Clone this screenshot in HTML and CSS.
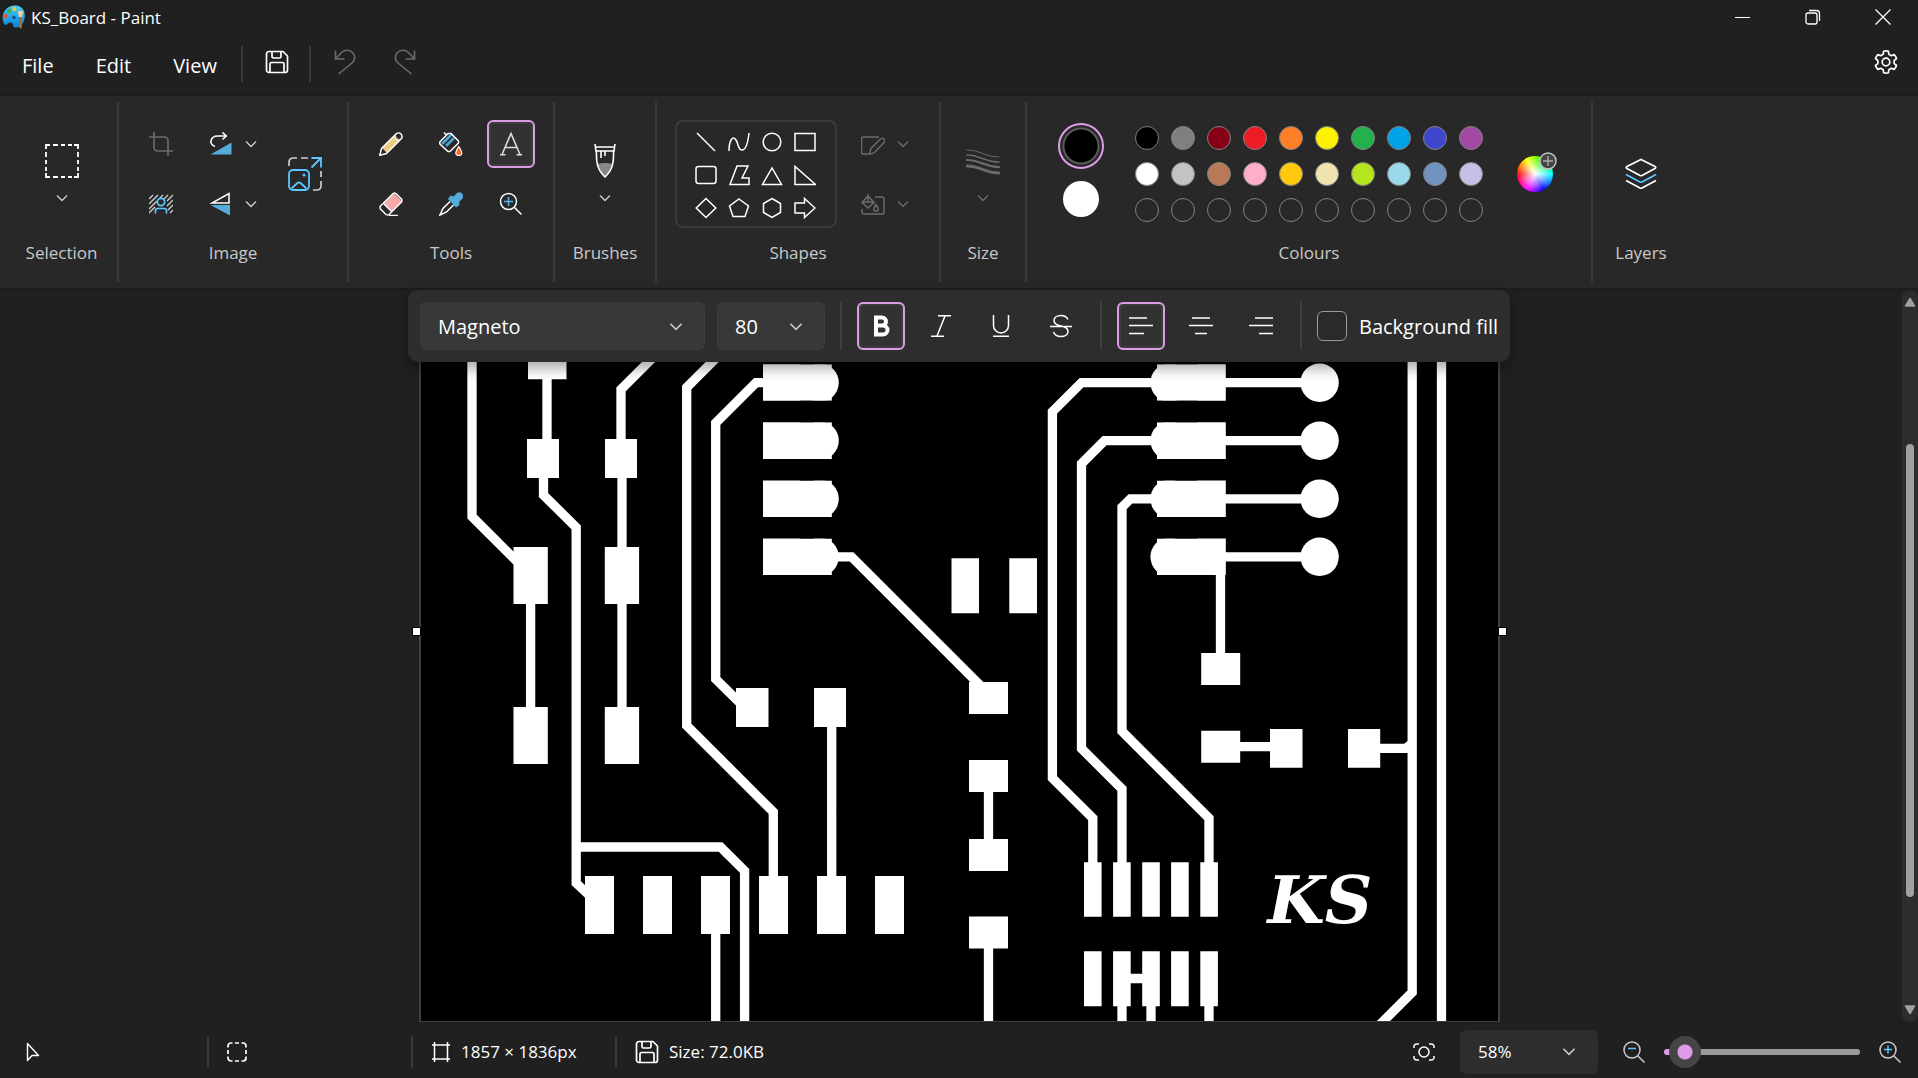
FILE: index.html
```html
<!DOCTYPE html>
<html lang="en-GB">
<head>
<meta charset="utf-8">
<title>KS_Board - Paint</title>
<link rel="stylesheet" href="styles.css">
</head>
<body>
<svg class="defs" aria-hidden="true">
  <symbol id="chevron" viewBox="0 0 12 8"><path d="M1 1.500 6 6.500l5-5" fill="none" stroke="currentColor" stroke-width="1.400"/></symbol>
  <symbol id="save" viewBox="0 0 24 24"><g fill="none" stroke="currentColor" stroke-width="1.700" stroke-linejoin="round"><path d="M4 1.500h14L22.500 6v14a2.500 2.500 0 0 1-2.500 2.500H4A2.500 2.500 0 0 1 1.500 20V4A2.500 2.500 0 0 1 4 1.500z"/><path d="M7 1.500v5A1.500 1.500 0 0 0 8.500 8h6A1.500 1.500 0 0 0 16 6.500v-5M5 22.500V14a1.500 1.500 0 0 1 1.500-1.500h11A1.500 1.500 0 0 1 19 14v8.500"/></g></symbol>
  <linearGradient id="palette" x1="0" y1="0" x2="0" y2="1"><stop offset="0" stop-color="#45d0f5"/><stop offset="1" stop-color="#0a7fd6"/></linearGradient>
</svg>

<header class="titlebar">
  <svg class="app-icon" viewBox="0 0 24 26"><path d="M2 20C-1 14 1 6 7 3c6-3 13-1 15 4 2 6 0 13-5 16-3 1-6 1-6-2 0-2-2-3-4-2-2 1-3 3-5 1z" fill="url(#palette)"/><circle cx="4" cy="12" r="2.200" fill="#f1502f"/><circle cx="7" cy="7" r="2.200" fill="#3fae49"/><circle cx="12.500" cy="5" r="2" fill="#ffc928"/><circle cx="12" cy="13.500" r="1.700" fill="#0b4f86"/><path d="M16 7h5v2l-1 4h-3l-1-4z" fill="#e8cfae"/><path d="M17 13h3v10l-1.500 2-1.500-2z" fill="#b3661e"/></svg>
  <h1 class="title">KS_Board - Paint</h1>
  <div class="window-buttons">
    <button class="window-button" aria-label="Minimise"><svg width="16" height="16" viewBox="0 0 16 16"><path d="M0 8.500h15" stroke="#fff"/></svg></button>
    <button class="window-button" aria-label="Restore"><svg width="16" height="16" viewBox="0 0 16 16" fill="none" stroke="#fff" stroke-width="1.300"><rect x="1" y="4" width="11" height="11" rx="2"/><path d="M4 1.500h7.500a3 3 0 0 1 3 3V12"/></svg></button>
    <button class="window-button" aria-label="Close"><svg width="16" height="16" viewBox="0 0 16 16"><path d="M.5.5l15 15m0-15l-15 15" stroke="#fff" stroke-width="1.300"/></svg></button>
  </div>
</header>

<nav class="menubar">
  <button class="menu">File</button>
  <button class="menu">Edit</button>
  <button class="menu">View</button>
  <span class="divider"></span>
  <button class="quick" aria-label="Save"><svg width="24" height="24"><use href="#save"/></svg></button>
  <span class="divider"></span>
  <button class="quick muted" aria-label="Undo"><svg width="24" height="26" viewBox="0 0 24 26" fill="none" stroke="currentColor" stroke-width="1.600"><path d="M2.500 1.500v8.500h9M2.500 10l6-6.500c4-3.500 9-2.500 11.500.5 2.500 3.500 2 7-1 10L5.500 25"/></svg></button>
  <button class="quick muted" aria-label="Redo"><svg width="24" height="26" viewBox="0 0 24 26" fill="none" stroke="currentColor" stroke-width="1.600"><path d="M21.500 1.500v8.500h-9M21.500 10l-6-6.500C11.500 0 6.500 1 4 4c-2.500 3.500-2 7 1 10L18.500 25"/></svg></button>
  <button class="quick settings" aria-label="Settings"><svg width="24" height="24" viewBox="0 0 24 24" fill="none" stroke="currentColor" stroke-width="1.700" stroke-linejoin="round"><path d="M9.200 4.200 9.600 1.300q2.400-.8 4.800 0l.4 2.900 2.550 1.500 2.750-1.100q2 1.700 2.400 4.100l-2.350 1.800v3l2.350 1.800q-.6 2.500-2.400 4.100l-2.750-1.100-2.550 1.500-.4 2.900q-2.400.8-4.800 0l-.4-2.900-2.550-1.500-2.750 1.100q-1.800-1.600-2.400-4.100l2.350-1.800v-3L1.500 8.700q.6-2.500 2.400-4.100l2.750 1.100z"/><circle cx="12" cy="12" r="3.800"/></svg></button>
</nav>

<section class="ribbon" aria-label="Ribbon">
  <div class="group group-selection">
    <button class="tall" aria-label="Selection">
      <svg width="34" height="34" viewBox="0 0 34 34" fill="none" stroke="#fff" stroke-width="1.800"><path d="M5 1H1v4M29 1h4v4M5 33H1v-4M29 33h4v-4M8 1h5m3 0h4m3 0h4M8 33h5m3 0h4m3 0h4M1 8v5m0 3v4m0 3v4M33 8v5m0 3v4m0 3v4"/></svg>
      <svg class="chevron"><use href="#chevron"/></svg>
    </button>
    <h2 class="caption">Selection</h2>
  </div>

  <div class="group">
    <div class="cluster">
      <div class="stack">
        <button class="tool muted" aria-label="Crop"><svg width="24" height="24" viewBox="0 0 24 24" fill="none" stroke="currentColor" stroke-width="1.700"><path d="M0 5h15.500A3.500 3.500 0 0 1 19 8.500V24M5 0v15.500A3.500 3.500 0 0 0 8.500 19H24"/></svg></button>
        <button class="tool" aria-label="Remove background"><svg width="24" height="20" viewBox="0 0 24 20" fill="none"><path d="M0 5l4-4M0 10l9-9M0 15l8-8M0 19l6-6M11 4l3-3M15 5l4-4M18 7l6-6M18 12l6-6M19 16l5-5M21 19l3-3" stroke="#ccc" stroke-width="1.400"/><circle cx="12" cy="8" r="3.600" stroke="#5bc8ff" stroke-width="1.700"/><path d="M6.500 19.500v-3a2 2 0 0 1 2-2h7a2 2 0 0 1 2 2v3" stroke="#5bc8ff" stroke-width="1.700"/></svg></button>
      </div>
      <div class="stack">
        <button class="split" aria-label="Rotate"><svg width="24" height="24" viewBox="0 0 24 24" fill="none"><path d="M22.500 10.500V22.500H1.500z" fill="#56acd8"/><path d="M6 14.500C3 13.500 1.500 11 2 9c.5-3.500 3.500-5 7-5h8M13.500.5 17.300 4l-3.800 3.500" stroke="#fff" stroke-width="1.600"/></svg><svg class="chevron"><use href="#chevron"/></svg></button>
        <button class="split" aria-label="Flip"><svg width="24" height="24" viewBox="0 0 24 24"><path d="M20 1.500v9.500H3z" fill="none" stroke="#fff" stroke-width="1.500"/><path d="M21 13v10.500L1.500 13z" fill="#56acd8"/></svg><svg class="chevron"><use href="#chevron"/></svg></button>
      </div>
      <button class="tool tool-tall" aria-label="Resize"><svg width="34" height="34" viewBox="0 0 34 34" fill="none"><path d="M1 9V5a4 4 0 0 1 4-4h4M13 1h7M33 14v6M33 24v5a4 4 0 0 1-4 4h-4" stroke="#ccc" stroke-width="1.700"/><g stroke="#5bc8ff" stroke-width="1.800"><path d="M23.500 1H33v9.500M33 1 23.500 10.500"/><rect x="1" y="13" width="20" height="20" rx="4"/><path d="M3.500 31.500 9.500 26q1.500-1.300 3 0l6 5.500"/></g><circle cx="16" cy="18" r="1.500" fill="#5bc8ff"/></svg></button>
    </div>
    <h2 class="caption">Image</h2>
  </div>

  <div class="group">
    <div class="tool-grid">
      <button class="tool" aria-label="Pencil"><svg width="24" height="24" viewBox="0 0 24 24"><path d="M3 16 16 3l5 5L8 21z" fill="#edcd83"/><path d="M.8 23.200 2.500 16.500 17 2a3.500 3.500 0 0 1 5 5L7.500 21.500z" fill="none" stroke="#fff" stroke-width="1.500" stroke-linejoin="round"/><path d="M16 3.200q0 5 5 5" fill="#282828" stroke="#fff" stroke-width="1.200"/></svg></button>
      <button class="tool" aria-label="Fill"><svg width="24" height="24" viewBox="0 0 24 24" fill="none"><path d="M3 12 13 2M7 14 15 6" stroke="#4ea9d8" stroke-width="2.500"/><path d="M5 .5l3 3M10 1.500h2L19.500 9v2L11 19.500H9L.8 12v-2L9 1.500z" stroke="#fff" stroke-width="1.500"/><path d="M19.800 14.500q6 9 0 9t0-9z" fill="#fe6226" stroke="#fff" stroke-width="1.200"/></svg></button>
      <button class="tool selected" aria-label="Text" aria-pressed="true"><svg width="24" height="24" viewBox="0 0 24 24" fill="none" stroke="#ddd" stroke-width="1.600"><path d="M3 22.500 12 1.500l9 21M6 15.500h12M1 22.700h5.500m11 0H23"/></svg></button>
      <button class="tool" aria-label="Eraser"><svg width="24" height="24" viewBox="0 0 24 24"><path d="M4.500 11.500 14 2q1-1 2 0l6.500 6.500q1 1 0 2L13 20z" fill="#f6a9a9"/><path d="M1.500 14 14 1.500q1.500-1 3 0l5.500 5.500q1 1.500 0 3L10 22.500q-1.500 1-3 0L1.500 17q-1-1.500 0-3zM4.500 11.500 13 20M10 23.400h9" fill="none" stroke="#fff" stroke-width="1.400"/></svg></button>
      <button class="tool" aria-label="Colour picker"><svg width="24" height="24" viewBox="0 0 24 24"><path d="M11 9.500 4 16.500.8 23.200 7.500 20l7-7" fill="none" stroke="#fff" stroke-width="1.500"/><path d="M9 7l2.500-3.500 3 1L18 1a4 4 0 0 1 5.500 5.500L20 10l.5 3-3.500 2.500z" fill="#56acd8"/></svg></button>
      <button class="tool" aria-label="Magnifier"><svg width="24" height="24" viewBox="0 0 24 24" fill="none"><circle cx="9.500" cy="9.500" r="8" stroke="#fff" stroke-width="1.500"/><path d="M15.500 15.500 22.500 22.500" stroke="#fff" stroke-width="1.500"/><path d="M9.500 5v9M5 9.500h9" stroke="#56b4e6" stroke-width="1.600"/></svg></button>
    </div>
    <h2 class="caption">Tools</h2>
  </div>

  <div class="group group-brushes">
    <button class="tall" aria-label="Brushes">
      <svg width="24" height="34" viewBox="0 0 24 34" fill="none"><path d="M4 20q8-2 16 0-1 7-8 12.500Q5 27 4 20z" fill="#888"/><path d="M2 0l1 7h18l1-7M3 3h18" stroke="#fff" stroke-width="1.600"/><path d="M3.500 7c-.5 12 1 19 8.500 26 7.500-7 9-14 8.500-26M8 7v7M12 7v5" stroke="#fff" stroke-width="1.600"/></svg>
      <svg class="chevron"><use href="#chevron"/></svg>
    </button>
    <h2 class="caption">Brushes</h2>
  </div>

  <div class="group">
    <div class="cluster">
      <div class="shape-box">
        <button class="shape" aria-label="Line"><svg viewBox="0 0 22 22"><path d="M2 2l18 18"/></svg></button>
        <button class="shape" aria-label="Curve"><svg viewBox="0 0 22 22"><path d="M1 20C1 9 5 4 8 9s2 10 6 10 6-8 7-17"/></svg></button>
        <button class="shape" aria-label="Oval"><svg viewBox="0 0 22 22"><circle cx="11" cy="11" r="8.800"/></svg></button>
        <button class="shape" aria-label="Rectangle"><svg viewBox="0 0 22 22"><path d="M1 2.500h20v17H1z"/></svg></button>
        <button class="shape" aria-label="Rounded rectangle"><svg viewBox="0 0 22 22"><rect x="1" y="2.500" width="20" height="17" rx="2.500"/></svg></button>
        <button class="shape" aria-label="Polygon"><svg viewBox="0 0 22 22"><path d="M9 2h11l-6 12h7v6.500H2z"/></svg></button>
        <button class="shape" aria-label="Triangle"><svg viewBox="0 0 22 22"><path d="M11 4 1.500 20.500h19z"/></svg></button>
        <button class="shape" aria-label="Right triangle"><svg viewBox="0 0 22 22"><path d="M1 2.500v18h20.500z"/></svg></button>
        <button class="shape" aria-label="Diamond"><svg viewBox="0 0 22 22"><path d="M11 1.500 20.800 11 11 20.500 1.200 11z"/></svg></button>
        <button class="shape" aria-label="Pentagon"><svg viewBox="0 0 22 22"><path d="M11 2l9.500 7L17 19.500H5L1.500 9z"/></svg></button>
        <button class="shape" aria-label="Hexagon"><svg viewBox="0 0 22 22"><path d="M11 1.500l8.500 5v9l-8.500 5-8.500-5v-9z"/></svg></button>
        <button class="shape" aria-label="Right arrow"><svg viewBox="0 0 22 22"><path d="M1 6h9.500V1.500L21 11 10.500 20.500V16H1z"/></svg></button>
      </div>
      <div class="stack">
        <button class="split muted" aria-label="Shape outline"><svg width="24" height="24" viewBox="0 0 24 24" fill="none" stroke="currentColor" stroke-width="1.500"><path d="M18 5H2.500a2 2 0 0 0-2 2v13a2 2 0 0 0 2 2H8"/><path d="M8.500 22l1.500-5.500L19.500 7q2-1.500 3.500 0t0 3.500L14 20q-2.500 2-5.500 2z"/></svg><svg class="chevron"><use href="#chevron"/></svg></button>
        <button class="split muted" aria-label="Shape fill"><svg width="24" height="24" viewBox="0 0 24 24" fill="none" stroke="currentColor" stroke-width="1.500"><path d="M14 5h7a2 2 0 0 1 2 2v13a2 2 0 0 1-2 2H3a2 2 0 0 1-2-2v-3"/><path d="M7 2v7M1 10.500 7 4l6 6.500L7 16zM1 10h12M15 12.500q4.500 6.500 0 6.500t0-6.500z"/></svg><svg class="chevron"><use href="#chevron"/></svg></button>
      </div>
    </div>
    <h2 class="caption">Shapes</h2>
  </div>

  <div class="group group-size">
    <button class="tall muted" aria-label="Size">
      <svg width="34" height="34" viewBox="0 0 34 34" fill="none" stroke="currentColor" stroke-linecap="round"><path d="M1 6c13 0 18 7 32 7" stroke-width="1"/><path d="M1 11c13 0 18 7 32 7" stroke-width="1.600"/><path d="M1 16c13 0 18 7 32 7" stroke-width="2.200"/><path d="M1 22c13 0 18 7 32 7" stroke-width="2.800"/></svg>
      <svg class="chevron"><use href="#chevron"/></svg>
    </button>
    <h2 class="caption">Size</h2>
  </div>

  <div class="group">
    <div class="colours">
      <div class="current">
        <button class="primary" aria-label="Colour 1, black"></button>
        <button class="secondary" aria-label="Colour 2, white"></button>
      </div>
      <div class="swatches">
        <button class="swatch" style="background:#000000" aria-label="Black"></button>
        <button class="swatch" style="background:#7f7f7f" aria-label="Grey"></button>
        <button class="swatch" style="background:#880015" aria-label="Dark red"></button>
        <button class="swatch" style="background:#ed1c24" aria-label="Red"></button>
        <button class="swatch" style="background:#ff7f27" aria-label="Orange"></button>
        <button class="swatch" style="background:#fff200" aria-label="Yellow"></button>
        <button class="swatch" style="background:#22b14c" aria-label="Green"></button>
        <button class="swatch" style="background:#00a2e8" aria-label="Turquoise"></button>
        <button class="swatch" style="background:#3f48cc" aria-label="Indigo"></button>
        <button class="swatch" style="background:#a349a4" aria-label="Purple"></button>
        <button class="swatch" style="background:#ffffff" aria-label="White"></button>
        <button class="swatch" style="background:#c3c3c3" aria-label="Light grey"></button>
        <button class="swatch" style="background:#b97a57" aria-label="Brown"></button>
        <button class="swatch" style="background:#ffaec9" aria-label="Rose"></button>
        <button class="swatch" style="background:#ffc90e" aria-label="Gold"></button>
        <button class="swatch" style="background:#efe4b0" aria-label="Light yellow"></button>
        <button class="swatch" style="background:#b5e61d" aria-label="Lime"></button>
        <button class="swatch" style="background:#99d9ea" aria-label="Light turquoise"></button>
        <button class="swatch" style="background:#7092be" aria-label="Blue-grey"></button>
        <button class="swatch" style="background:#c8bfe7" aria-label="Lavender"></button>
        <button class="swatch" aria-label="Empty 1"></button>
        <button class="swatch" aria-label="Empty 2"></button>
        <button class="swatch" aria-label="Empty 3"></button>
        <button class="swatch" aria-label="Empty 4"></button>
        <button class="swatch" aria-label="Empty 5"></button>
        <button class="swatch" aria-label="Empty 6"></button>
        <button class="swatch" aria-label="Empty 7"></button>
        <button class="swatch" aria-label="Empty 8"></button>
        <button class="swatch" aria-label="Empty 9"></button>
        <button class="swatch" aria-label="Empty 10"></button>
      </div>
      <button class="edit-colours" aria-label="Edit colours"><span class="wheel"><svg class="wheel-badge" viewBox="0 0 18 18"><circle cx="9" cy="9" r="8" fill="#454545" stroke="#c4c4c4" stroke-width="1.500"/><path d="M9 4v10M4 9h10" stroke="#aaa" stroke-width="1.400"/></svg></span></button>
    </div>
    <h2 class="caption">Colours</h2>
  </div>

  <div class="group group-layers">
    <button class="tall tall-centred" aria-label="Layers"><svg width="32" height="32" viewBox="0 0 32 32" fill="none" stroke-width="1.700"><path d="M16 1.500 30 8.500q1.500 1 0 2L17 17.500q-1 .5-2 0L2 10.500q-1.500-1 0-2z" stroke="#fff"/><path d="M1 16.500 15 24q1 .5 2 0l14-7.500" stroke="#5bc8ff"/><path d="M1 22.500 15 30q1 .5 2 0l14-7.500" stroke="#fff"/></svg></button>
    <h2 class="caption">Layers</h2>
  </div>
</section>

<main class="workspace">
  <div class="canvas">
    <svg class="board" viewBox="421 290 1077 731" preserveAspectRatio="xMidYMin slice" role="img" aria-label="Circuit board artwork">
      <rect x="421" y="290" width="1077" height="731" fill="#000"/>
      <g fill="none" stroke="#fff" stroke-width="9.300">
        <path d="M472 290V516.500L517 561.500M547 370v80M543.500 470v25l32.700 32.500V883L592 898M621 450v-60.500L671 339.500M622 470v85M530.600 600v110M622 600v110"/>
        <path d="M736 338.200 686.700 387.500V725.500L773.300 812v70M770 382.700h-14L715.700 423v256L740 703M825 556.800h26.500L980 685.300M831.700 720v165M572 847H720.500L744.600 871V1021M715.700 930v91"/>
        <path d="M1160 382.700h-78.500L1052.400 411.800V778L1092.800 818.300V870M1160 440.700h-55.500L1081.500 463.700V748.500L1122 789v80M1160 498.800h-29.500L1122 507.300V731.300L1209 818.300V870"/>
        <path d="M1220 382.700h90M1220 440.700h90M1220 498.800h90M1220 556.800h90M1220.500 560v100M1235 746.700h40M1375 748.400h37M1412.200 290V992.300L1378 1026.500M1441.500 290v731"/>
        <path d="M988.500 785v60M988.500 940v81M1122 1000v21M1151 1000v21M1209 1000v21M1128 978.500h18"/>
      </g>
      <g fill="#fff">
        <path d="M528 330h38.500v49.300H528zM527 439h32v39h-32zM605 439h32v39h-32zM513.500 547h34.300v57h-34.300zM604.800 547h34.300v57h-34.300zM513.500 707h34.300v57h-34.300zM604.800 707h34.300v57h-34.300z"/>
        <path d="M763 364.200h68.800v36.600H763zM763 422.300h68.800v36.600H763zM763 480.400h68.800v36.600H763zM763 538.500h68.800v36.600H763z"/>
        <path d="M951.500 558.300h27.500v55H951.500zM1009.300 558.300h27.700v55h-27.700zM736 688h32.500v39H736zM814 688h32v39h-32z"/>
        <path d="M585 876h29v58h-29zM643 876h29v58h-29zM701 876h29v58h-29zM759 876h29v58h-29zM817 876h29v58h-29zM875 876h29v58h-29z"/>
        <path d="M969 682h39v32h-39zM969 760h39v32h-39zM969 839h39v32h-39zM969 916.500h39v32h-39z"/>
        <path d="M1157 364.200h68.800v36.600H1157zM1157 422.300h68.800v36.600H1157zM1157 480.400h68.800v36.600H1157zM1157 538.500h68.800v36.600H1157z"/>
        <path d="M1201.200 653h39v32h-39zM1201.200 730.700h39v32h-39zM1270 729h32.500v38.700H1270zM1348 729h32.200v38.700H1348zM1404 744l6-5v8z"/>
        <path d="M1084 862.300h17.600v54.500H1084zM1113.100 862.300h17.600v54.500h-17.600zM1142.200 862.300h17.600v54.500h-17.600zM1171.100 862.300h17.600v54.500h-17.600zM1200.300 862.300h17.600v54.500h-17.600z"/>
        <path d="M1084 951.200h17.600v55H1084zM1113.100 951.200h17.600v55h-17.600zM1142.200 951.200h17.600v55h-17.600zM1171.100 951.200h17.600v55h-17.600zM1200.300 951.200h17.600v55h-17.600z"/>
        <circle cx="819.600" cy="382.700" r="19.200"/><circle cx="819.600" cy="440.700" r="19.200"/><circle cx="819.600" cy="498.800" r="19.200"/><circle cx="819.600" cy="556.800" r="19.200"/>
        <circle cx="1169.600" cy="382.700" r="19.200"/><circle cx="1169.600" cy="440.700" r="19.200"/><circle cx="1169.600" cy="498.800" r="19.200"/><circle cx="1169.600" cy="556.800" r="19.200"/>
        <circle cx="1319.600" cy="382.700" r="19.200"/><circle cx="1319.600" cy="440.700" r="19.200"/><circle cx="1319.600" cy="498.800" r="19.200"/><circle cx="1319.600" cy="556.800" r="19.200"/>
      </g>
      <g fill="#000">
        <path d="M800 400.800h31.800v3H800zM800 361.500h31.800v2.700H800zM800 458.900h31.800v3H800zM800 419.500h31.800v2.800H800zM800 517h31.800v3H800zM800 477.500h31.800v2.900H800zM800 575.100h31.800v3H800zM800 535.500h31.800v3H800z"/>
        <path d="M1157 400.800h40v3h-40zM1157 361.500h40v2.700h-40zM1157 458.900h40v3h-40zM1157 419.500h40v2.800h-40zM1157 517h40v3h-40zM1157 477.500h40v2.900h-40zM1157 575.100h40v3h-40zM1157 535.500h40v3h-40z"/>
      </g>
      <text class="board-mark" x="1320" y="923" text-anchor="middle">KS</text>
    </svg>
    <span class="handle handle-left"></span>
    <span class="handle handle-right"></span>
  </div>

  <form class="text-bar" aria-label="Text options">
    <div class="combo combo-font">
      <select aria-label="Font"><option>Magneto</option></select>
      <svg class="chevron"><use href="#chevron"/></svg>
    </div>
    <div class="combo combo-size">
      <select aria-label="Font size"><option>80</option></select>
      <svg class="chevron"><use href="#chevron"/></svg>
    </div>
    <span class="bar-divider"></span>
    <button type="button" class="tool selected" aria-label="Bold" aria-pressed="true"><svg width="24" height="24" viewBox="0 0 24 24" fill="none" stroke="#fff" stroke-width="4"><path d="M7 3.500h6a4 4 0 0 1 0 8H7zM7 11.500h7a4.500 4.500 0 0 1 0 9H7zM7 2v20"/></svg></button>
    <button type="button" class="tool" aria-label="Italic"><svg width="24" height="24" viewBox="0 0 24 24" fill="none" stroke="#fff" stroke-width="1.500"><path d="M9 1.800h13M2 22.200h13M16 2 8 22"/></svg></button>
    <button type="button" class="tool" aria-label="Underline"><svg width="24" height="24" viewBox="0 0 24 24" fill="none" stroke="#fff" stroke-width="1.500"><path d="M4.500 1v10.500a7.500 7.500 0 0 0 15 0V1M4 22.300h16"/></svg></button>
    <button type="button" class="tool" aria-label="Strikethrough"><svg width="24" height="24" viewBox="0 0 24 24" fill="none" stroke="#fff" stroke-width="1.500"><path d="M19 5.500C17.500 2.500 15 1.500 12 1.500c-4 0-7 2-7 5 0 3.500 3 4.700 7 5.500s7 2 7 5.500c0 3-3 5-7 5s-6.500-1.500-7.500-4.500M1 12.500h22"/></svg></button>
    <span class="bar-divider"></span>
    <button type="button" class="tool selected" aria-label="Align left" aria-pressed="true"><svg width="24" height="24" viewBox="0 0 24 24" stroke="#fff" stroke-width="1.600"><path d="M0 4h18M0 11.500h24M0 19.500h15"/></svg></button>
    <button type="button" class="tool" aria-label="Align centre"><svg width="24" height="24" viewBox="0 0 24 24" stroke="#fff" stroke-width="1.600"><path d="M3 4h18M0 11.500h24M6 19.500h12"/></svg></button>
    <button type="button" class="tool" aria-label="Align right"><svg width="24" height="24" viewBox="0 0 24 24" stroke="#fff" stroke-width="1.600"><path d="M6 4h18M0 11.500h24M10 19.500h14"/></svg></button>
    <span class="bar-divider"></span>
    <label class="fill-option"><input type="checkbox" class="tick"> Background fill</label>
  </form>

  <div class="scrollbar" aria-hidden="true">
    <svg width="12" height="10" viewBox="0 0 12 10"><path d="M1.500 9h9L6 1.500z" fill="#a0a0a0" stroke="#a0a0a0" stroke-width="1.500" stroke-linejoin="round"/></svg>
    <div class="scroll-track"><div class="scroll-thumb"></div></div>
    <svg width="12" height="10" viewBox="0 0 12 10"><path d="M1.500 1h9L6 8.500z" fill="#a0a0a0" stroke="#a0a0a0" stroke-width="1.500" stroke-linejoin="round"/></svg>
  </div>
</main>

<footer class="statusbar">
  <div class="status status-pointer"><svg width="14" height="20" viewBox="0 0 14 20" fill="none" stroke="#fff" stroke-width="1.400" stroke-linejoin="round"><path d="M1.500 1.500v17l4.500-5h6.500z"/></svg></div>
  <div class="status status-region"><svg width="20" height="20" viewBox="0 0 20 20" fill="none" stroke="#fff" stroke-width="1.700"><path d="M1 5.500V4a3 3 0 0 1 3-3h1.500M14.500 1H16a3 3 0 0 1 3 3v1.500M19 14.500V16a3 3 0 0 1-3 3h-1.500M5.500 19H4a3 3 0 0 1-3-3v-1.500M8 1h4M8 19h4M1 8v4M19 8v4"/></svg></div>
  <div class="status status-canvas"><svg width="20" height="20" viewBox="0 0 20 20" fill="none" stroke="#fff" stroke-width="1.500"><path d="M3.500 0v20M16.500 0v20M1 3h18M1 17h18"/></svg><span>1857 × 1836px</span></div>
  <div class="status status-file"><svg width="24" height="24"><use href="#save"/></svg><span>Size: 72.0KB</span></div>
  <div class="zoom">
    <button class="zoom-button" aria-label="Fit to window"><svg width="22" height="18" viewBox="0 0 22 18" fill="none" stroke="#fff" stroke-width="1.500"><circle cx="11" cy="9" r="5"/><path d="M1 5V3.500A2.500 2.500 0 0 1 3.500 1H6M16 1h2.500A2.500 2.500 0 0 1 21 3.500V5M21 13v1.500a2.500 2.500 0 0 1-2.500 2.500H16M6 17H3.500A2.500 2.500 0 0 1 1 14.500V13"/></svg></button>
    <div class="combo combo-zoom">
      <select aria-label="Zoom level"><option>58%</option></select>
      <svg class="chevron"><use href="#chevron"/></svg>
    </div>
    <button class="zoom-button" aria-label="Zoom out"><svg width="22" height="22" viewBox="0 0 22 22" fill="none" stroke="#ccc" stroke-width="1.500"><circle cx="9" cy="9" r="8"/><path d="M15 15l6.500 6.500"/><path d="M5 7.500h8" stroke="#5bc8ff"/></svg></button>
    <input class="slider" type="range" min="0" max="100" value="3" aria-label="Zoom">
    <button class="zoom-button" aria-label="Zoom in"><svg width="22" height="22" viewBox="0 0 22 22" fill="none" stroke="#ccc" stroke-width="1.500"><circle cx="9" cy="9" r="8"/><path d="M15 15l6.500 6.500"/><path d="M5 8.500h8M9 4.500v8" stroke="#5bc8ff"/></svg></button>
  </div>
</footer>
</body>
</html>
```

FILE: styles.css
```css
* {
  box-sizing: border-box;
}

body {
  margin: 0;
  min-height: 100vh;
  display: flex;
  flex-direction: column;
  overflow: hidden;
  background: #202020;
  color: #fff;
  font-family: "Segoe UI", "Open Sans", "Noto Sans", sans-serif;
  font-size: 17px;
}

button,
select,
input {
  margin: 0;
  padding: 0;
  border: 0;
  background: none;
  color: inherit;
  font: inherit;
}

svg {
  display: block;
  flex: none;
}

.defs {
  position: absolute;
  width: 0;
  height: 0;
}

.chevron {
  width: 12px;
  height: 8px;
  color: #ccc;
}

.muted,
.muted .chevron {
  color: #6b6b6b;
}

/* Title bar */
.titlebar {
  display: flex;
  align-items: center;
  height: 34px;
  padding-left: 2px;
}

.app-icon {
  width: 24px;
  height: 26px;
}

.title {
  margin: 0 0 0 5px;
  font-size: 17px;
  font-weight: 400;
}

.window-buttons {
  display: flex;
  margin-left: auto;
}

.window-button {
  display: grid;
  place-items: center;
  width: 70px;
  height: 34px;
}

/* Menu bar */
.menubar {
  display: flex;
  align-items: center;
  height: 62px;
  padding-left: 2px;
  border-bottom: 2px solid #1c1c1c;
}

.menu {
  height: 48px;
  padding: 2px 20px 0;
  font-size: 20px;
}

.menu + .menu {
  margin-left: 2px;
}

.divider {
  width: 2px;
  height: 36px;
  margin: 0 10px 0 4px;
  background: #383838;
}

.quick {
  display: grid;
  place-items: center;
  width: 48px;
  height: 48px;
  margin-right: 4px;
  padding-bottom: 4px;
}

.quick + .quick {
  margin-left: 8px;
}

.quick + .settings {
  margin-left: auto;
  margin-right: 8px;
}

/* Ribbon */
.ribbon {
  display: flex;
  padding: 6px 0;
  background: #282828;
  border-bottom: 2px solid #1c1c1c;
}

.group {
  display: flex;
  flex-direction: column;
  align-items: center;
  height: 180px;
  padding: 18px 18px 0;
  border-right: 2px solid #3a3a3a;
}

.group:last-child {
  border-right: 0;
}

.group-selection {
  width: 119px;
  padding: 18px 14px 0 20px;
}

.group-brushes {
  width: 102px;
}

.group-size {
  width: 86px;
}

.group-layers {
  width: 96px;
}

.caption {
  margin: 12px 0 0;
  color: #c8c8c8;
  font-size: 17px;
  font-weight: 400;
  line-height: 26px;
}

.tall {
  display: flex;
  flex-direction: column;
  align-items: center;
  gap: 16px;
  width: 60px;
  height: 108px;
  padding-top: 24px;
}

.tall-centred {
  justify-content: center;
  padding-top: 0;
}

.cluster {
  display: flex;
  gap: 12px;
}

.stack {
  display: flex;
  flex-direction: column;
  gap: 12px;
}

.tool {
  display: grid;
  place-items: center;
  width: 48px;
  height: 48px;
}

.tool-tall {
  height: 108px;
}

.split {
  display: flex;
  align-items: center;
  gap: 12px;
  width: 72px;
  height: 48px;
  padding-left: 12px;
}

.tool-grid {
  display: grid;
  grid-template-columns: repeat(3, 48px);
  gap: 12px;
}

.selected {
  border: 2px solid #dd9de6;
  border-radius: 6px;
  background: #323232;
  box-shadow: inset 0 0 0 2px #3c3c3c;
}

.shape-box {
  display: grid;
  grid-template-columns: repeat(4, 33px);
  grid-template-rows: repeat(3, 33px);
  place-content: center;
  width: 162px;
  height: 108px;
  padding: 2px 2px 0 0;
  border: 2px solid #3a3a3a;
  border-radius: 8px;
}

.shape {
  display: grid;
  place-items: center;
}

.shape svg {
  width: 22px;
  height: 22px;
  fill: none;
  stroke: #fff;
  stroke-width: 1.5px;
}

/* Colours */
.colours {
  display: flex;
  align-items: center;
  gap: 30px;
  height: 108px;
  padding: 0 16px 0 12px;
}

.current {
  display: flex;
  flex-direction: column;
  align-items: center;
  gap: 12px;
  width: 48px;
  padding-bottom: 8px;
}

.primary,
.secondary {
  width: 46px;
  height: 46px;
  border-radius: 50%;
}

.primary {
  border: 2px solid #dd9de6;
  background: radial-gradient(circle, #000 16px, #5a5a5a 17px, #5a5a5a 18px, #282828 19px);
}

.secondary {
  width: 36px;
  height: 36px;
  background: #fff;
}

.swatches {
  display: grid;
  grid-template-columns: repeat(10, 24px);
  gap: 12px;
}

.swatch {
  width: 24px;
  height: 24px;
  border: 1px solid #828282;
  border-radius: 50%;
}

.edit-colours {
  display: grid;
  place-items: center;
  width: 44px;
  height: 108px;
}

.wheel {
  position: relative;
  width: 36px;
  height: 36px;
  border-radius: 50%;
  background:
    radial-gradient(closest-side, #fff, rgba(255, 255, 255, 0)),
    conic-gradient(from 270deg, #f00, #ff0, #0f0, #0ff, #00f, #f0f, #f00);
}

.wheel-badge {
  position: absolute;
  top: -4px;
  right: -4px;
  width: 18px;
  height: 18px;
}

/* Workspace */
.workspace {
  position: relative;
  flex: 1;
  display: flex;
  justify-content: center;
  min-height: 0;
}

.canvas {
  position: relative;
  width: 1081px;
  border: 2px solid #404040;
  border-top: 0;
  border-bottom-width: 1px;
}

.board {
  width: 100%;
  height: 100%;
}

.board-mark {
  fill: #fff;
  font-family: Magneto, "DejaVu Serif", serif;
  font-size: 66px;
  font-style: italic;
  font-weight: 700;
}

.handle {
  position: absolute;
  top: 337px;
  width: 9px;
  height: 9px;
  border: 1px solid #000;
  background: #fff;
}

.handle-left {
  right: 100%;
}

.handle-right {
  left: 100%;
}

.text-bar {
  position: absolute;
  top: 0;
  left: 50%;
  transform: translateX(-50%);
  display: flex;
  align-items: center;
  gap: 12px;
  width: 1102px;
  height: 72px;
  padding: 0 12px;
  border-radius: 10px;
  background: #2d2d2d;
  box-shadow: 0 6px 14px rgba(0, 0, 0, 0.35);
  font-size: 20px;
}

.combo {
  display: grid;
  grid-template-columns: 1fr auto;
  align-items: center;
  height: 48px;
  border-radius: 6px;
  background: #383838;
  box-shadow: inset 0 0 0 1px #3c3c3c;
}

.combo select {
  grid-area: 1 / 1 / 2 / 3;
  width: 100%;
  height: 100%;
  padding-left: 18px;
  appearance: none;
}

.combo .chevron {
  grid-area: 1 / 2;
  width: 14px;
  height: 9px;
  margin-right: 22px;
  pointer-events: none;
}

.combo-font {
  width: 285px;
}

.combo-size {
  width: 108px;
}

.bar-divider {
  width: 2px;
  height: 48px;
  margin: 0 3px;
  background: #3e3e3e;
}

.fill-option {
  display: flex;
  align-items: center;
  gap: 12px;
  white-space: nowrap;
}

.tick {
  width: 30px;
  height: 30px;
  border: 1px solid #9a9a9a;
  border-radius: 6px;
  background: #2a2a2a;
  appearance: none;
}

.scrollbar {
  position: absolute;
  top: 0;
  right: 0;
  bottom: 0;
  display: flex;
  flex-direction: column;
  align-items: center;
  gap: 8px;
  width: 16px;
  padding: 7px 0;
  border-radius: 8px;
  background: #2c2c2c;
}

.scroll-track {
  flex: 1;
  padding-top: 129px;
}

.scroll-thumb {
  width: 8px;
  height: 82%;
  border-radius: 4px;
  background: #a0a0a0;
}

/* Status bar */
.statusbar {
  display: flex;
  align-items: center;
  height: 56px;
  padding-top: 2px;
  border-top: 1px solid #1c1c1c;
}

.status {
  display: flex;
  align-items: center;
  gap: 10px;
  height: 32px;
  padding-left: 18px;
  border-right: 2px solid #383838;
  white-space: nowrap;
}

.status-pointer {
  width: 209px;
  padding-left: 26px;
}

.status-region,
.status-canvas {
  width: 204px;
}

.status-file {
  border-right: 0;
}

.zoom {
  display: flex;
  align-items: center;
  margin-left: auto;
  padding-right: 4px;
}

.zoom-button {
  display: grid;
  place-items: center;
  width: 48px;
  height: 44px;
}

.combo-zoom {
  width: 138px;
  height: 44px;
  margin: 0 12px;
  background: #2d2d2d;
  box-shadow: none;
}

.slider {
  width: 196px;
  height: 32px;
  margin: 0 6px;
  appearance: none;
}

.slider::-webkit-slider-runnable-track {
  height: 6px;
  border-radius: 3px;
  background: linear-gradient(90deg, #dd9de6 10px, #9a9a9a 10px);
}

.slider::-webkit-slider-thumb {
  width: 32px;
  height: 32px;
  margin-top: -13px;
  border-radius: 50%;
  background: radial-gradient(circle, #dd9de6 7px, #454545 8px);
  appearance: none;
}
```
